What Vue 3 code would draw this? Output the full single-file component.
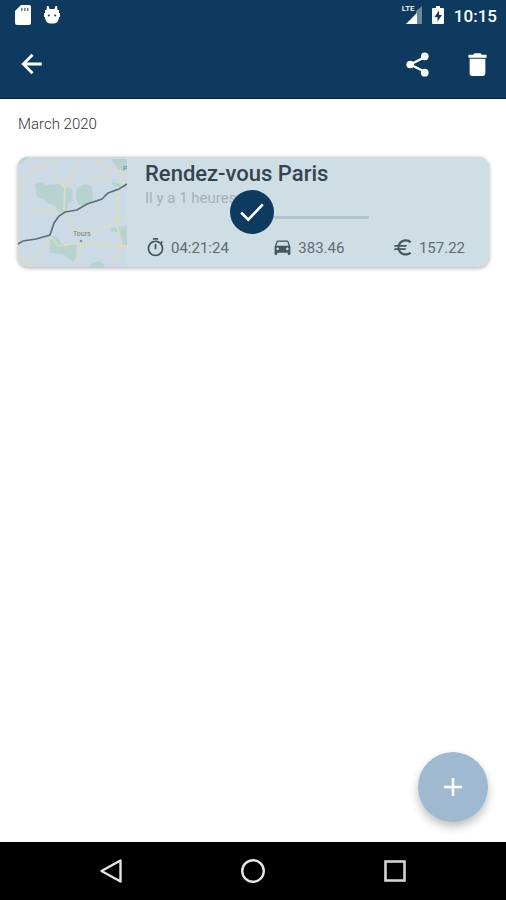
<template>
  <div class="screen">
    <header class="top">
      <div class="status-bar">
        <div class="status-group">
          <svg class="sd" viewBox="0 0 16 20" aria-hidden="true">
            <path d="M6 0h8a2 2 0 0 1 2 2v16a2 2 0 0 1-2 2H2a2 2 0 0 1-2-2V6z" fill="#fff" />
            <path d="M6 3h1.6v3H6zM9 3h1.6v3H9zM12 3h1.6v3H12z" fill="#6d8299" />
          </svg>
          <svg class="bug" viewBox="0 0 16 18" aria-hidden="true">
            <path d="M3 0h1.500l1 3h5l1-3H13l.5 4H15v3h1v4h-1a5.500 6 0 0 1-5 6.500H6A5.500 6 0 0 1 1 11H0V7h1V4h1.500z" fill="#fff" />
            <circle cx="4.800" cy="9.500" r="1" fill="#0d3a5e" />
            <circle cx="11.200" cy="9.500" r="1" fill="#0d3a5e" />
          </svg>
        </div>
        <div class="status-group right">
          <div class="signal">
            <svg viewBox="0 0 20 18" aria-hidden="true">
              <path d="M20 0v18H4l9-9V6z" fill="#6a879e" />
              <path d="M15 7v11H4z" fill="#fff" />
            </svg>
            <span>LTE</span>
          </div>
          <svg class="battery" viewBox="0 0 12 18" aria-hidden="true">
            <path d="M4 0h4v2h3a1 1 0 0 1 1 1v14a1 1 0 0 1-1 1H1a1 1 0 0 1-1-1V3a1 1 0 0 1 1-1h3z" fill="#fff" />
            <path d="M7 4.500L2.500 11H5.500v4.500L10 9H7z" fill="#0d3a5e" />
          </svg>
          <time class="clock">10:15</time>
        </div>
      </div>
      <div class="app-bar">
        <button class="icon-btn" aria-label="Retour">
          <svg viewBox="0 0 24 24"><path d="M21 12H4M12.500 3.500L4 12l8.500 8.500" fill="none" stroke="#fff" stroke-width="2.600" /></svg>
        </button>
        <div class="actions">
          <button class="icon-btn" aria-label="Partager">
            <svg class="large" viewBox="0 0 24 24">
              <path d="M18 6L6 12l12 6" fill="none" stroke="#fff" stroke-width="2" />
              <g fill="#fff">
                <circle cx="18" cy="5.200" r="3.200" />
                <circle cx="6" cy="12" r="3.200" />
                <circle cx="18" cy="18.800" r="3.200" />
              </g>
            </svg>
          </button>
          <button class="icon-btn" aria-label="Supprimer">
            <svg class="large" viewBox="0 0 24 24">
              <path d="M5.500 7.300V19.500c0 1.100.9 2 2 2h9c1.100 0 2-.9 2-2V7.300zM19.500 4h-4l-1-1.300h-5L8.500 4h-4v2.400h15z" fill="#fff" />
            </svg>
          </button>
        </div>
      </div>
    </header>

    <main class="content">
      <h2 class="month">March 2020</h2>

      <article class="card">
        <svg class="map" viewBox="0 0 109 110" preserveAspectRatio="xMidYMid slice" aria-hidden="true">
          <rect width="109" height="110" fill="#cbdae4" />
          <g fill="#b6d3d0">
            <path d="M17 27l7-2 4 3 12-1 9 3 5 2 1 12-5 2-1 8-9 1-2-6-9-3-3-4-7-2z" />
            <path d="M59 31l9-4 6 3 1 13-7 6-8-1-2-8z" />
            <path d="M93 2h16v12l-9-2zM94 25l14 2v4l-13-2z" />
            <path d="M32 79l8 1 3 7 16 1-1 12-3 5-10-8-13-1z" />
            <path d="M93 71l16-2v21l-6-1v-13l-10-2zM72 107l9-3 5 3v3H72z" />
            <path d="M0 0h11L3 6l-3 3z" />
          </g>
          <g fill="none" stroke="#dadcc2" stroke-width="1.800">
            <path d="M39 2L27 9 18 11 8 19 3 28 2 47" />
            <path d="M35 14l6 11 6 6 5-6 3-12 9-11M47 31l-1 21 5 8 1 10 5 4" />
            <path d="M12 52l14 1 16 4 18-5" stroke-width="1.500" />
            <path d="M77 2l13 9 11 3 7 3M69 24l14-4 9-2M106 14l-1 12-5 9-2 30 6 23 2 5" />
            <path d="M109 60l-12 1-8 9-19 5-13-1" />
            <path d="M32 78l8 11 14-2 26-1 29 3M64 87l-4 12-3 11" />
            <path d="M33 80L22 96 10 109M0 97l6 8 3 5M106 89l-9 12-2 9" />
          </g>
          <path d="M0 87L5 84L18 82L32 78L36 66L41 59L47 55L59 53L69 47L84 42L90 36L101 32L109 27" fill="none" stroke="#5b7180" stroke-width="1.700" />
          <circle cx="63" cy="84" r="1.300" fill="#82929b" />
          <text x="55" y="79" font-size="7" fill="#71808a">Tours</text>
          <text x="105" y="14" font-size="7" fill="#71808a">P</text>
        </svg>
        <div class="info">
          <h3 class="title">{{ trip.title }}</h3>
          <p class="ago">{{ trip.ago }}</p>
          <div class="rule"></div>
          <ul class="stats">
            <li v-for="stat in trip.stats" :key="stat.icon">
              <svg viewBox="0 0 24 24" aria-hidden="true">
                <path :d="icons[stat.icon]" fill="#45565f" />
              </svg>
              <span>{{ stat.value }}</span>
            </li>
          </ul>
        </div>
        <div v-if="selected" class="check">
          <svg viewBox="0 0 24 24" aria-hidden="true">
            <path d="M2 12.500l6.500 6.500L22 5" fill="none" stroke="#fff" stroke-width="2.400" />
          </svg>
        </div>
      </article>

      <button class="fab" aria-label="Ajouter">
        <svg viewBox="0 0 18 18"><path d="M9 0v18M0 9h18" stroke="#fff" stroke-width="2.600" /></svg>
      </button>
    </main>

    <nav class="nav-bar">
      <button aria-label="Back">
        <svg viewBox="0 0 24 24"><path d="M21.500 1.500v21L2.500 12z" fill="none" stroke="#e4e4e4" stroke-width="2.400" stroke-linejoin="round" /></svg>
      </button>
      <button aria-label="Home">
        <svg viewBox="0 0 24 24"><circle cx="12" cy="12" r="10.800" fill="none" stroke="#e4e4e4" stroke-width="2.400" /></svg>
      </button>
      <button aria-label="Recents">
        <svg viewBox="0 0 24 24"><rect x="2.500" y="2.500" width="19" height="19" fill="none" stroke="#d4d4d4" stroke-width="2.600" /></svg>
      </button>
    </nav>
  </div>
</template>

<script setup>
import { ref } from 'vue';

const selected = ref(true);

const trip = {
  title: 'Rendez-vous Paris',
  ago: 'Il y a 1 heures',
  stats: [
    { icon: 'timer', value: '04:21:24' },
    { icon: 'car', value: '383.46' },
    { icon: 'euro', value: '157.22' },
  ],
};

const icons = {
  timer: 'M15 1H9v2h6V1zm-4 13h2V8h-2v6zm8.030-6.610l1.420-1.420c-.43-.51-.9-.99-1.410-1.410l-1.420 1.420C16.070 4.740 14.120 4 12 4c-4.970 0-9 4.030-9 9s4.020 9 9 9 9-4.030 9-9c0-2.120-.74-4.070-1.970-5.610zM12 20c-3.870 0-7-3.130-7-7s3.130-7 7-7 7 3.130 7 7-3.130 7-7 7z',
  car: 'M18.920 5.010C18.720 4.420 18.160 4 17.500 4h-11c-.66 0-1.210.42-1.420 1.010L3 11v8.500c0 .55.450 1 1 1h1c.55 0 1-.45 1-1V18h12v1.500c0 .55.450 1 1 1h1c.55 0 1-.45 1-1V11l-2.080-5.990zM6.500 15c-.83 0-1.500-.67-1.500-1.500S5.670 12 6.500 12s1.500.67 1.500 1.500S7.330 15 6.500 15zm11 0c-.83 0-1.500-.67-1.500-1.500s.67-1.500 1.500-1.500 1.500.67 1.500 1.500-.67 1.500-1.500 1.500zM5 10l1.500-4.500h11L19 10H5z',
  euro: 'M14.500 18.700c-2.800 0-5.200-1.600-6.400-3.900H14l1-2H7.400c-.1-.5-.1-1.100 0-1.700H15l1-2H8.100c1.200-2.300 3.600-3.900 6.400-3.900 1.800 0 3.400.7 4.700 1.700L21 5.200C19.300 3.700 17 2.700 14.500 2.700c-4.100 0-7.600 2.600-8.900 6.400H2l-1 2h4.200v1.700H2l-1 2h4.600c1.300 3.800 4.800 6.400 8.900 6.400 2.500 0 4.800-1 6.500-2.400L19.200 17c-1.300 1-2.900 1.700-4.700 1.700z',
};
</script>

<style>
body {
  margin: 0;
  background: #fff;
}
</style>

<style scoped>
.screen {
  display: flex;
  flex-direction: column;
  min-height: 100vh;
  font-family: Roboto, "Liberation Sans", sans-serif;
}
h2, h3, p, ul {
  margin: 0;
  padding: 0;
}
svg {
  display: block;
}
button {
  border: none;
  padding: 0;
  background: none;
  cursor: pointer;
}
.top {
  background: #0d3a5e;
  border-bottom: 1px solid #0b1f4a;
}
.status-bar {
  display: flex;
  justify-content: space-between;
  align-items: center;
  height: 30px;
  padding: 0 9px 0 15px;
}
.status-group {
  display: flex;
  align-items: center;
  gap: 13px;
}
.status-group.right {
  gap: 10px;
}
.sd {
  width: 16px;
  height: 20px;
}
.bug {
  width: 16px;
  height: 18px;
}
.signal {
  position: relative;
}
.signal svg {
  width: 20px;
  height: 18px;
}
.signal span {
  position: absolute;
  top: -1px;
  left: 0;
  padding: 0 1px 1px 0;
  background: #0d3a5e;
  color: #fff;
  font-size: 8px;
  line-height: 8px;
  font-weight: 500;
}
.battery {
  width: 12px;
  height: 18px;
}
.clock {
  padding-top: 2px;
  color: #fff;
  font-size: 17px;
  line-height: 20px;
  font-weight: 500;
}
.app-bar {
  display: flex;
  justify-content: space-between;
  align-items: center;
  height: 68px;
  padding: 0 13px 0 16px;
}
.actions {
  display: flex;
  gap: 28px;
}
.icon-btn {
  display: flex;
  align-items: center;
  justify-content: center;
  width: 32px;
  height: 32px;
}
.icon-btn svg {
  width: 26px;
  height: 26px;
}
.icon-btn .large {
  width: 29px;
  height: 29px;
}
.content {
  flex: 1;
  display: flex;
  flex-direction: column;
  padding: 15px 17px 20px 18px;
}
.month {
  margin-bottom: 23px;
  color: #333;
  font-size: 15px;
  line-height: 20px;
  font-weight: 300;
}
.card {
  position: relative;
  display: flex;
  border-radius: 10px;
  background: #cfdde5;
  box-shadow: 0 1px 4px rgba(0, 0, 0, 0.35);
}
.map {
  flex: none;
  width: 109px;
  height: 110px;
  border-radius: 10px 0 0 10px;
}
.info {
  flex: 1;
  padding: 4px 24px 8px 18px;
}
.title {
  color: #34454f;
  font-size: 22px;
  line-height: 26px;
  font-weight: 500;
}
.ago {
  margin-top: 1px;
  color: #a3b1ba;
  font-size: 15px;
  line-height: 20px;
}
.rule {
  width: 30%;
  height: 3px;
  margin: 8px 0 0 40%;
  background: #b3c3ce;
}
.stats {
  display: grid;
  grid-template-columns: 19fr 18fr auto;
  margin-top: 18px;
  list-style: none;
}
.stats li {
  display: flex;
  align-items: center;
  gap: 5px;
  color: #5d6c75;
  font-size: 15px;
  line-height: 20px;
}
.stats svg {
  width: 21px;
  height: 21px;
}
.check {
  position: absolute;
  top: 50%;
  left: 45%;
  display: flex;
  align-items: center;
  justify-content: center;
  width: 44px;
  height: 44px;
  margin-top: -22px;
  border-radius: 50%;
  background: #0d3a5e;
}
.check svg {
  width: 26px;
  height: 26px;
}
.fab {
  display: flex;
  align-items: center;
  justify-content: center;
  align-self: flex-end;
  width: 70px;
  height: 70px;
  margin: auto 1px 0 0;
  border-radius: 50%;
  background: #9fbad0;
  box-shadow: 0 5px 10px rgba(0, 0, 0, 0.25);
}
.fab svg {
  width: 18px;
  height: 18px;
}
.nav-bar {
  display: flex;
  justify-content: center;
  align-items: center;
  gap: 118px;
  height: 58px;
  background: #000;
}
.nav-bar svg {
  width: 24px;
  height: 24px;
}
</style>
